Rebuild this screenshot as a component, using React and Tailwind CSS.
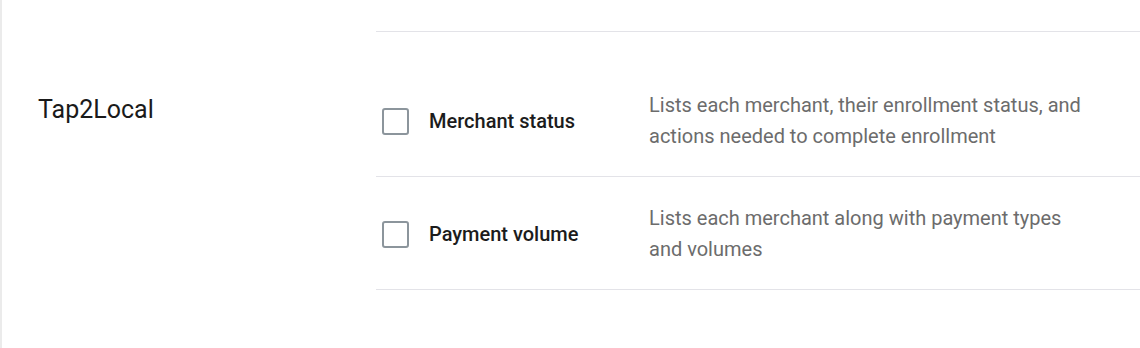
const reports = [
  {
    id: "merchant-status",
    name: "Merchant status",
    description: "Lists each merchant, their enrollment status, and actions needed to complete enrollment",
  },
  {
    id: "payment-volume",
    name: "Payment volume",
    description: "Lists each merchant along with payment types and volumes",
  },
]

function ReportRow({ report }) {
  return (
    <div className="flex items-center border-b border-[#e3e3e8] pt-[26px] pb-[24px]">
      <div className="flex w-[273px] shrink-0 items-center gap-5 pl-[6px]">
        <input
          type="checkbox"
          id={report.id}
          className="h-[27px] w-[27px] shrink-0 appearance-none rounded-[3px] border-2 border-[#8c959c] bg-white"
        />
        <label htmlFor={report.id} className="text-[20px] font-medium text-[#1c1c1c]">
          {report.name}
        </label>
      </div>
      <p className="max-w-[450px] text-[20px] leading-[31px] text-[#6c6c6c]">{report.description}</p>
    </div>
  )
}

function App() {
  return (
    <div className="h-[348px] w-[1140px] overflow-hidden border-l-2 border-[#ebebeb] bg-white font-['Roboto',sans-serif]">
      <div className="ml-[374px] h-[32px] border-b border-[#e3e3e8]"></div>
      <div className="flex pt-[32px]">
        <div className="w-[374px] shrink-0 pl-[36px] pt-[31px]">
          <h3 className="text-[25px] leading-[30px] text-[#1a1a1a]">Tap2Local</h3>
        </div>
        <div className="flex-1">
          {reports.map(report => (
            <ReportRow key={report.id} report={report} />
          ))}
        </div>
      </div>
    </div>
  )
}

export default App
